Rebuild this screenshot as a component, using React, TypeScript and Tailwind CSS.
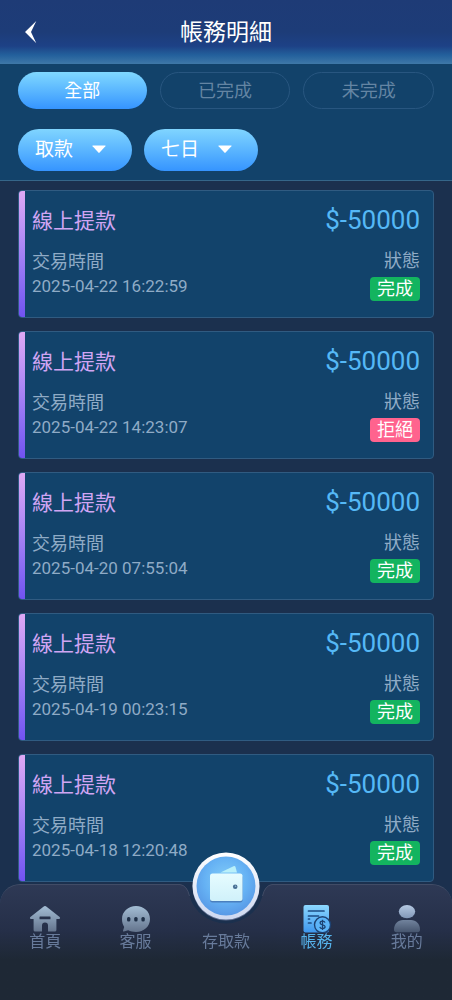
import React, { useState } from 'react';
import clsx from 'clsx';

type Status = 'done' | 'rejected';

interface BillRecord {
  title: string;
  amount: string;
  time: string;
  status: Status;
}

const records: BillRecord[] = [
  { title: '線上提款', amount: '$-50000', time: '2025-04-22 16:22:59', status: 'done' },
  { title: '線上提款', amount: '$-50000', time: '2025-04-22 14:23:07', status: 'rejected' },
  { title: '線上提款', amount: '$-50000', time: '2025-04-20 07:55:04', status: 'done' },
  { title: '線上提款', amount: '$-50000', time: '2025-04-19 00:23:15', status: 'done' },
  { title: '線上提款', amount: '$-50000', time: '2025-04-18 12:20:48', status: 'done' },
];

const tabs = ['全部', '已完成', '未完成'];

const Header: React.FC = () => (
  <header className="grid h-16 shrink-0 grid-cols-[64px_1fr_64px] items-center bg-[linear-gradient(180deg,#1e3b76_0%,#1d3c78_50%,#1d4186_72%,#23609c_86%,#3f78a8_100%)]">
    <button type="button" aria-label="返回" className="flex h-16 items-center pl-6">
      <svg width="14" height="24" viewBox="0 0 14 24" fill="#fff">
        <path d="M12.300 1 1 12 12.300 23.200 7 12Z" />
      </svg>
    </button>
    <h1 className="pt-[2px] text-center text-[23px] leading-8 text-white">帳務明細</h1>
  </header>
);

interface FilterSelectProps {
  label: string;
  options: string[];
}

const FilterSelect: React.FC<FilterSelectProps> = ({ label, options }) => (
  <div className="relative">
    <select
      aria-label={label}
      className="h-[42px] w-[114px] appearance-none rounded-full bg-linear-to-b from-[#80d5ff] to-[#3594ff] pl-[17px] text-[19px] text-white"
    >
      {options.map((option) => (
        <option key={option} className="text-black">
          {option}
        </option>
      ))}
    </select>
    <svg
      className="pointer-events-none absolute top-4 right-[26px]"
      width="14"
      height="9"
      viewBox="0 0 14 9"
      fill="#fff"
    >
      <path d="M.8.6h12.400q.8 0 .2.7L7.600 7.600q-.6.6-1.200 0L.6 1.300Q0 .6.8.6Z" />
    </svg>
  </div>
);

const Filters: React.FC = () => {
  const [active, setActive] = useState(tabs[0]);

  return (
    <section className="shrink-0 border-b border-[#356689] bg-[#12426a] px-[18px] pt-2 pb-[9px]">
      <div className="flex gap-[13px]">
        {tabs.map((tab) => (
          <button
            key={tab}
            type="button"
            onClick={() => setActive(tab)}
            className={clsx(
              'h-[37px] flex-1 rounded-full text-lg leading-6',
              active === tab
                ? 'bg-linear-to-b from-[#80d8ff] to-[#3594ff] text-white'
                : 'border border-[#285680] text-[#6485a3]'
            )}
          >
            {tab}
          </button>
        ))}
      </div>
      <div className="mt-5 flex gap-3">
        <FilterSelect label="類型" options={['取款', '存款']} />
        <FilterSelect label="日期" options={['七日', '今日']} />
      </div>
    </section>
  );
};

const RecordCard: React.FC<{ record: BillRecord }> = ({ record }) => (
  <article className="flex h-32 shrink-0 overflow-hidden rounded-[4px] border border-[#305b81] bg-[#12436b]">
    <div className="w-[6px] shrink-0 bg-linear-to-b from-[#dfa9f5] to-[#7152f2]" />
    <div className="flex flex-1 justify-between pr-[13px] pl-[7px]">
      <div className="pt-4">
        <h2 className="text-[21px] leading-7 text-[#d0a5f3]">{record.title}</h2>
        <p className="mt-[15px] text-lg leading-6 text-[#8fabc6]">交易時間</p>
        <p className="text-[17px] leading-6 text-[#8fabc6]">{record.time}</p>
      </div>
      <div className="flex flex-col items-end pt-[15px]">
        <p className="text-[26px] leading-7 text-[#55b8f6]">{record.amount}</p>
        <p className="mt-[15px] text-lg leading-6 text-[#8fabc6]">狀態</p>
        <span
          className={clsx(
            'mt-1 rounded-[4px] px-[7px] text-lg leading-6 text-white',
            record.status === 'done' ? 'bg-[#13b45f]' : 'bg-[#ff638e]'
          )}
        >
          {record.status === 'done' ? '完成' : '拒絕'}
        </span>
      </div>
    </div>
  </article>
);

const HomeIcon = () => (
  <svg width="32" height="28" viewBox="0 0 32 28">
    <defs>
      <linearGradient id="home" x1="0" y1="0" x2="0" y2="1">
        <stop offset="0" stopColor="#a3bdd4" />
        <stop offset="1" stopColor="#64748d" />
      </linearGradient>
    </defs>
    <path
      fill="url(#home)"
      d="M14.400 1.700a2.600 2.600 0 0 1 3.200 0L30.600 12c.9.800.5 1.900-.6 1.900H27.400V25a1.600 1.600 0 0 1-1.600 1.600H19V20.500a3 3 0 0 0-6 0v6.100H6.200A1.600 1.600 0 0 1 4.600 25V13.900H2c-1.100 0-1.500-1.100-.6-1.900Z"
    />
    <rect x="10.500" y="11.500" width="11" height="2.800" rx=".5" fill="#27324b" />
  </svg>
);

const ChatIcon = () => (
  <svg width="32" height="28" viewBox="0 0 32 28">
    <defs>
      <linearGradient id="chat" x1="0" y1="0" x2="0" y2="1">
        <stop offset="0" stopColor="#a3bdd4" />
        <stop offset="1" stopColor="#64748d" />
      </linearGradient>
    </defs>
    <path
      fill="url(#chat)"
      d="M16 1C8.200 1 2 6.600 2 14c0 3.400.9 5.900 2.200 7.900L3 25.800c-.2.600.2.900.8.7l4.400-1.200c2.200 1.200 4.900 1.700 7.800 1.700 7.800 0 14-5.500 14-13S23.800 1 16 1Z"
    />
    <g fill="#1f3048">
      <rect x="7" y="12" width="3.400" height="4.400" rx="1.500" />
      <rect x="14.200" y="12" width="3.400" height="4.400" rx="1.500" />
      <rect x="21.400" y="12" width="3.400" height="4.400" rx="1.500" />
    </g>
  </svg>
);

const BillIcon = () => (
  <svg width="32" height="28" viewBox="0 0 32 28">
    <defs>
      <linearGradient id="bill" x1="0" y1="0" x2="0" y2="1">
        <stop offset="0" stopColor="#8cd8ff" />
        <stop offset="1" stopColor="#3e97ee" />
      </linearGradient>
    </defs>
    <rect x="3.500" y="0" width="25.500" height="27.500" rx="2" fill="url(#bill)" />
    <path
      d="M8.500 6H24M8.500 11H18.500M8.500 14h1M8.500 18h2.500"
      stroke="#1d4c84"
      strokeWidth="1.700"
      strokeLinecap="round"
    />
    <circle cx="22.500" cy="19.800" r="8.700" fill="#1d4272" />
    <circle cx="22.500" cy="19.800" r="7.300" fill="#5cb4f8" />
    <path
      d="M25 17.600c-.3-1-1.300-1.500-2.500-1.500-1.400 0-2.400.7-2.400 1.800 0 2.600 5 1.200 5 3.900 0 1.100-1.100 1.800-2.600 1.800-1.400 0-2.400-.6-2.700-1.700M22.500 14.800v10.200"
      fill="none"
      stroke="#1d4272"
      strokeWidth="1.300"
    />
  </svg>
);

const UserIcon = () => (
  <svg width="32" height="28" viewBox="0 0 32 28">
    <defs>
      <linearGradient id="head" x1="0" y1="0" x2="0" y2="1">
        <stop offset="0" stopColor="#b5c9e2" />
        <stop offset="1" stopColor="#8298b8" />
      </linearGradient>
      <linearGradient id="body" x1="0" y1="0" x2="0" y2="1">
        <stop offset="0" stopColor="#71839d" />
        <stop offset="1" stopColor="#46556e" />
      </linearGradient>
    </defs>
    <path
      fill="url(#body)"
      d="M3 24.500C3 19 7 15 12 15h8c5 0 9 4 9 9.500 0 1.800-.8 2.700-2.500 2.700h-21C3.800 27.200 3 26.300 3 24.500Z"
    />
    <ellipse cx="16" cy="7" rx="9" ry="7.600" fill="#2a3550" />
    <ellipse cx="16" cy="6.600" rx="8.200" ry="6.600" fill="url(#head)" />
  </svg>
);

const WalletIcon = () => (
  <svg width="68" height="70" viewBox="0 0 68 70">
    <defs>
      <linearGradient id="ring" x1="0" y1="0" x2="0" y2="1">
        <stop offset="0" stopColor="#ffffff" />
        <stop offset="1" stopColor="#cdd8f0" />
      </linearGradient>
      <radialGradient id="disc" cx=".5" cy=".4" r=".6">
        <stop offset="0" stopColor="#83cdf8" />
        <stop offset=".6" stopColor="#66b2f4" />
        <stop offset="1" stopColor="#5899e6" />
      </radialGradient>
      <linearGradient id="wallet" x1="0" y1="0" x2="0" y2="1">
        <stop offset="0" stopColor="#e6fcff" />
        <stop offset="1" stopColor="#d0f1fa" />
      </linearGradient>
    </defs>
    <circle cx="34" cy="35" r="33.500" fill="#5d6c8e" />
    <circle cx="34" cy="34" r="33.500" fill="url(#ring)" />
    <circle cx="34" cy="34" r="29.500" fill="url(#disc)" />
    <path d="M28.500 20.500 41.500 14.200a1.500 1.500 0 0 1 2 .8l1.500 5.500Z" fill="#b9f0fa" />
    <rect x="18" y="23" width="32.500" height="27.500" rx="2.500" fill="#4a7fbe" />
    <rect x="18" y="21.500" width="32.500" height="27.500" rx="2.500" fill="url(#wallet)" />
    <circle cx="43.200" cy="34.800" r="2.300" fill="#486f94" />
    <circle cx="43.600" cy="34.300" r=".8" fill="#8fb6cf" />
  </svg>
);

const navItems = [
  { label: '首頁', icon: <HomeIcon /> },
  { label: '客服', icon: <ChatIcon /> },
  { label: '存取款', icon: <WalletIcon />, raised: true },
  { label: '帳務', icon: <BillIcon />, active: true },
  { label: '我的', icon: <UserIcon /> },
];

// Tab bar background: two stretching sides and a fixed notch under the wallet button
const NavBackground: React.FC = () => (
  <div className="absolute inset-0 flex">
    <div className="flex-1 rounded-tl-[20px] border-t border-[#414c66] bg-linear-to-b from-[#2e3955] via-[#252f48] via-40% to-[#1e2835] to-65%" />
    <svg width="100" height="116" viewBox="0 0 100 116" className="shrink-0">
      <defs>
        <linearGradient id="bar" x1="0" y1="0" x2="0" y2="116" gradientUnits="userSpaceOnUse">
          <stop offset="0" stopColor="#2e3955" />
          <stop offset=".4" stopColor="#252f48" />
          <stop offset=".65" stopColor="#1e2835" />
        </linearGradient>
      </defs>
      <path
        d="M0 0H4Q11 1 13.500 12A38 38 0 0 0 86.500 12Q89 1 96 0H100V116H0Z"
        fill="url(#bar)"
      />
      <path
        d="M0 .5H4Q11 1.500 13.500 12M86.500 12Q89 1.500 96 .5H100"
        fill="none"
        stroke="#414c66"
      />
    </svg>
    <div className="flex-1 rounded-tr-[20px] border-t border-[#414c66] bg-linear-to-b from-[#2e3955] via-[#252f48] via-40% to-[#1e2835] to-65%" />
  </div>
);

const BottomNav: React.FC = () => (
  <nav className="fixed inset-x-0 bottom-0 h-[116px]">
    <NavBackground />
    <div className="relative grid h-full grid-cols-5">
      {navItems.map((item) => (
        <a
          key={item.label}
          href="#"
          className={clsx(
            'flex flex-col items-center text-base leading-5',
            item.active ? 'text-[#56b3ec]' : 'text-[#687b9b]',
            item.raised ? '-mt-8 gap-[10px]' : 'pt-[21px] -space-y-px'
          )}
        >
          {item.icon}
          <span>{item.label}</span>
        </a>
      ))}
    </div>
  </nav>
);

const App: React.FC = () => (
  <div
    lang="zh-Hant"
    className="flex h-screen flex-col overflow-hidden bg-[#1b304e] font-['Roboto','Noto_Sans_CJK_TC',sans-serif]"
  >
    <Header />
    <Filters />
    <main className="flex flex-1 flex-col gap-[13px] overflow-y-auto px-[18px] pt-[9px] pb-[116px] [scrollbar-width:none]">
      {records.map((record) => (
        <RecordCard key={record.time} record={record} />
      ))}
    </main>
    <BottomNav />
  </div>
);

export default App;
